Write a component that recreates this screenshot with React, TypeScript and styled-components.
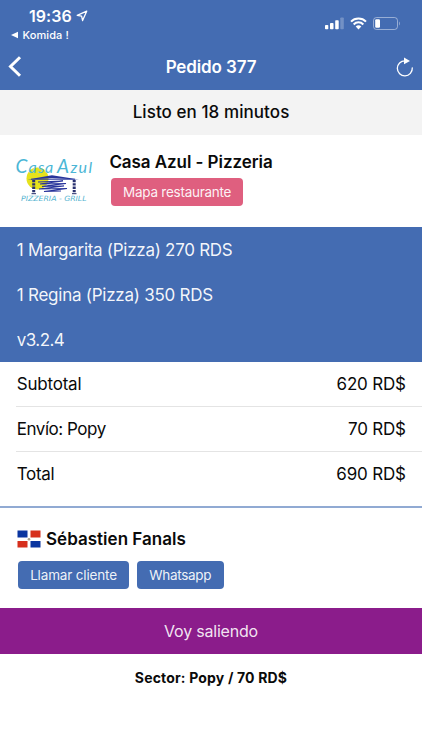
import React from 'react';
import styled, { createGlobalStyle } from 'styled-components';

const blue = '#446cb2';

const GlobalStyle = createGlobalStyle`
  * { box-sizing: border-box; }
  body {
    margin: 0;
    background: #fff;
    color: #0a0a0a;
    font-family: Inter, "Liberation Sans", sans-serif;
    font-size: 17px;
  }
  button { border: 0; padding: 0; margin: 0; font: inherit; color: inherit; background: none; }
  svg { display: block; }
`;

const Screen = styled.main`
  width: 422px;
  height: 750px;
  overflow: hidden;
  display: flex;
  flex-direction: column;
  background: #fff;
`;

const Label = styled.span<{ $track?: number }>`
  white-space: nowrap;
  letter-spacing: ${(p) => p.$track ?? 0}px;
`;

const Header = styled.header`
  flex: none;
  height: 90px;
  background: ${blue};
  color: #fff;
`;

const StatusBar = styled.div`
  height: 44px;
  display: flex;
  justify-content: space-between;
`;

const StatusLeft = styled.div`
  padding: 6px 0 0 10px;
`;

const Clock = styled.div`
  display: flex;
  align-items: center;
  gap: 4px;
  height: 20px;
  padding-left: 19px;
  font-size: 16px;
  font-weight: 600;
`;

const BackToApp = styled.div`
  display: flex;
  align-items: center;
  gap: 4.5px;
  height: 18px;
  font-size: 11px;
  font-weight: 500;
`;

const StatusIcons = styled.div`
  display: flex;
  align-items: center;
  gap: 6px;
  height: 46px;
  padding-right: 22px;
`;

const NavBar = styled.nav`
  height: 46px;
  display: grid;
  grid-template-columns: 60px 1fr 60px;
  align-items: center;
  padding: 0 8px;
`;

const NavTitle = styled.h1`
  margin: 0;
  font-size: 17px;
  font-weight: 600;
  line-height: 46px;
  text-align: center;
`;

const NavButton = styled.button<{ $end?: boolean }>`
  display: flex;
  justify-content: ${(p) => (p.$end ? 'flex-end' : 'flex-start')};
`;

const Banner = styled.div`
  flex: none;
  height: 44.5px;
  line-height: 44px;
  text-align: center;
  font-weight: 500;
  background: #f3f3f3;
`;

const Restaurant = styled.section`
  flex: none;
  height: 92.5px;
  display: flex;
  gap: 15.4px;
  padding: 17.5px 0 0 14px;
`;

const RestaurantInfo = styled.div`
  display: flex;
  flex-direction: column;
  align-items: flex-start;
`;

const Name = styled.h2`
  margin: 0;
  font-size: 17px;
  font-weight: 600;
  line-height: 20px;
`;

const PillButton = styled.button<{ $color: string; $width: number }>`
  width: ${(p) => p.$width}px;
  height: 28px;
  border-radius: 4px;
  background: ${(p) => p.$color};
  color: rgba(255, 255, 255, 0.93);
  font-size: 13.5px;
  line-height: 28px;
  text-align: center;
`;

const MapButton = styled(PillButton)`
  margin: 6.3px 0 0 1.5px;
`;

const Items = styled.ul`
  flex: none;
  height: 134.5px;
  margin: 0;
  padding: 0.5px 0 0 16.8px;
  list-style: none;
  background: ${blue};
  color: rgba(255, 255, 255, 0.94);
`;

const Item = styled.li`
  height: 45px;
  line-height: 45px;
`;

const Summary = styled.section`
  flex: none;
  height: 146.5px;
  padding-left: 16px;
  border-bottom: 2px solid #91aad3;
`;

const SummaryRow = styled.div<{ $last?: boolean }>`
  display: flex;
  justify-content: space-between;
  height: 45px;
  padding: 0 16.2px 0 0.7px;
  line-height: 44px;
  border-bottom: 1px solid ${(p) => (p.$last ? 'transparent' : '#e4e4e4')};
`;

const Customer = styled.section`
  flex: none;
  height: 100px;
  padding: 19.8px 0 0 16.5px;
`;

const CustomerName = styled.div`
  display: flex;
  align-items: center;
  gap: 5.5px;
  height: 22px;
`;

const Actions = styled.div`
  display: flex;
  gap: 8px;
  padding: 11.4px 0 0 1.5px;
`;

const LeaveButton = styled.button`
  flex: none;
  height: 45.5px;
  background: #8b1c8b;
  color: rgba(255, 255, 255, 0.9);
  font-size: 16px;
  line-height: 46px;
  text-align: center;
`;

const Sector = styled.p`
  margin: 0;
  font-size: 14px;
  font-weight: 700;
  line-height: 47px;
  text-align: center;
`;

const LogoTitle = styled.text`
  font: italic 400 16px Lato, "Liberation Sans", sans-serif;
  fill: #4bb6d6;
`;

const LogoCapital = styled.tspan`
  font-size: 19px;
`;

const LogoCaption = styled.text`
  font: italic 400 7.2px "DejaVu Sans", sans-serif;
  fill: #55b4d0;
`;

const Logo = () => (
  <svg width="80" height="54" viewBox="0 0 80 54">
    <circle cx="23.500" cy="26.500" r="11" fill="#e6e21c" />
    <LogoTitle x="1.500" y="20.500"><LogoCapital>C</LogoCapital><tspan x="14.500 24 31">asa</tspan></LogoTitle>
    <LogoTitle x="43" y="20.500"><LogoCapital>A</LogoCapital><tspan x="56.500 64.500 74.500">zul</tspan></LogoTitle>
    <path d="M13.500 27.500 L38 23.200 L65 27.500 L38 26.300 Z" fill="#28349b" />
    <path d="M17 27.300 H61" stroke="#28349b" strokeWidth="0.900" />
    <path d="M24 30 L49 29 L26 32 L52 31.500 L28 34.500 L50 34 L25 37 L53 36.500 L30 39.500 L47 39" fill="none" stroke="#28349b" strokeWidth="1.150" />
    <g fill="none" stroke="#28306f" strokeWidth="3" strokeDasharray="2.300 1">
      <path d="M19.700 28 V41.500" />
      <path d="M60.200 28 V41.500" />
    </g>
    <path d="M17.500 41.700 H22 M58 41.700 H62.500" stroke="#28306f" strokeWidth="1" />
    <LogoCaption x="7" y="48.500" textLength="65.500" lengthAdjust="spacingAndGlyphs">PIZZERIA - GRILL</LogoCaption>
  </svg>
);

const LocationArrow = () => (
  <svg width="12" height="12" viewBox="0 0 12 12">
    <path d="M10.700 1.200 L1.200 5.300 L5.600 6.200 L6.600 10.600 Z" fill="none" stroke="#fff" strokeWidth="1.300" strokeLinejoin="round" />
  </svg>
);

const BackTriangle = () => (
  <svg width="8" height="8" viewBox="0 0 8 8">
    <path d="M1 4 L8 0.800 V7.200 Z" fill="#fff" />
  </svg>
);

const Signal = () => (
  <svg width="19" height="13" viewBox="0 0 19 13" fill="#fff">
    <rect x="0" y="8" width="3.300" height="4.300" rx="0.800" />
    <rect x="5" y="6" width="3.500" height="6.300" rx="0.800" />
    <rect x="10.200" y="3.200" width="3.500" height="9.100" rx="0.800" />
    <rect x="15.300" y="0.500" width="3.500" height="11.800" rx="0.800" opacity="0.250" />
  </svg>
);

const Wifi = () => (
  <svg width="17" height="13" viewBox="0 0 17 13">
    <g fill="none" stroke="#fff" strokeWidth="2">
      <path d="M1 4.600 C5 0.400 12 0.400 16 4.600" />
      <path d="M3.700 7.500 C6.400 4.600 10.600 4.600 13.300 7.500" />
    </g>
    <path d="M5.700 9.400 C7.300 7.800 9.700 7.800 11.300 9.400 L8.500 12.400 Z" fill="#fff" />
  </svg>
);

const Battery = () => (
  <svg width="27" height="13" viewBox="0 0 27 13">
    <rect x="0.500" y="0.500" width="24" height="12" rx="3" fill="none" stroke="#fff" strokeOpacity="0.450" />
    <rect x="2.200" y="2.200" width="4.800" height="8.600" rx="1.200" fill="#fff" />
    <path d="M26 4.500 C27 5.200 27 7.800 26 8.500 Z" fill="#fff" opacity="0.500" />
  </svg>
);

const Chevron = () => (
  <svg width="14" height="22" viewBox="0 0 14 22">
    <path d="M12 1.200 L2.500 10.500 L12 19.800" fill="none" stroke="#fff" strokeWidth="3" />
  </svg>
);

const Refresh = () => (
  <svg width="18" height="20" viewBox="0 0 18 20">
    <path d="M9 3.800 A7.500 7.500 0 1 0 16.300 10.800" fill="none" stroke="#fff" strokeWidth="1.300" strokeLinecap="round" />
    <path d="M8 0.600 L14 3.900 L8 7.300 Z" fill="#fff" />
  </svg>
);

const Flag = () => (
  <svg width="24" height="18" viewBox="0 0 24 18">
    <path d="M0.500 0.500 H10.500 V7.500 H0.500 Z M13.500 11 H23.500 V17.500 H13.500 Z" fill="#0a35a0" />
    <path d="M13.500 0.500 H23.500 V7.500 H13.500 Z M0.500 11 H10.500 V17.500 H0.500 Z" fill="#d62f1c" />
    <circle cx="12" cy="9.200" r="1.300" fill="#a9a08e" />
  </svg>
);

const items = [
  { text: '1 Margarita (Pizza) 270 RDS', track: -0.283 },
  { text: '1 Regina (Pizza) 350 RDS', track: -0.25 },
  { text: 'v3.2.4', track: -0.567 },
];

const totals = [
  { label: 'Subtotal', track: -0.2, value: '620 RD$', valueTrack: -0.18 },
  { label: 'Envío: Popy', track: -0.459, value: '70 RD$', valueTrack: -0.2 },
  { label: 'Total', track: -0.3, value: '690 RD$', valueTrack: -0.18 },
];

export default function App() {
  return (
    <Screen>
      <GlobalStyle />
      <Header>
        <StatusBar>
          <StatusLeft>
            <Clock><Label $track={0.05}>19:36</Label><LocationArrow /></Clock>
            <BackToApp><BackTriangle /><Label $track={0.1}>Komida !</Label></BackToApp>
          </StatusLeft>
          <StatusIcons><Signal /><Wifi /><Battery /></StatusIcons>
        </StatusBar>
        <NavBar>
          <NavButton aria-label="Volver"><Chevron /></NavButton>
          <NavTitle><Label $track={-0.12}>Pedido 377</Label></NavTitle>
          <NavButton $end aria-label="Actualizar"><Refresh /></NavButton>
        </NavBar>
      </Header>
      <Banner><Label $track={0.07}>Listo en 18 minutos</Label></Banner>
      <Restaurant>
        <Logo />
        <RestaurantInfo>
          <Name><Label $track={-0.066}>Casa Azul - Pizzeria</Label></Name>
          <MapButton $color="#df5f7f" $width={132.5}><Label $track={-0.258}>Mapa restaurante</Label></MapButton>
        </RestaurantInfo>
      </Restaurant>
      <Items>
        {items.map((item) => (
          <Item key={item.text}><Label $track={item.track}>{item.text}</Label></Item>
        ))}
      </Items>
      <Summary>
        {totals.map((row, i) => (
          <SummaryRow key={row.label} $last={i === totals.length - 1}>
            <Label $track={row.track}>{row.label}</Label>
            <Label $track={row.valueTrack}>{row.value}</Label>
          </SummaryRow>
        ))}
      </Summary>
      <Customer>
        <CustomerName>
          <Flag />
          <Name><Label $track={0.019}>Sébastien Fanals</Label></Name>
        </CustomerName>
        <Actions>
          <PillButton $color={blue} $width={111}><Label $track={-0.166}>Llamar cliente</Label></PillButton>
          <PillButton $color={blue} $width={86.5}><Label $track={-0.303}>Whatsapp</Label></PillButton>
        </Actions>
      </Customer>
      <LeaveButton><Label $track={-0.205}>Voy saliendo</Label></LeaveButton>
      <Sector><Label $track={0.17}>Sector: Popy / 70 RD$</Label></Sector>
    </Screen>
  );
}
